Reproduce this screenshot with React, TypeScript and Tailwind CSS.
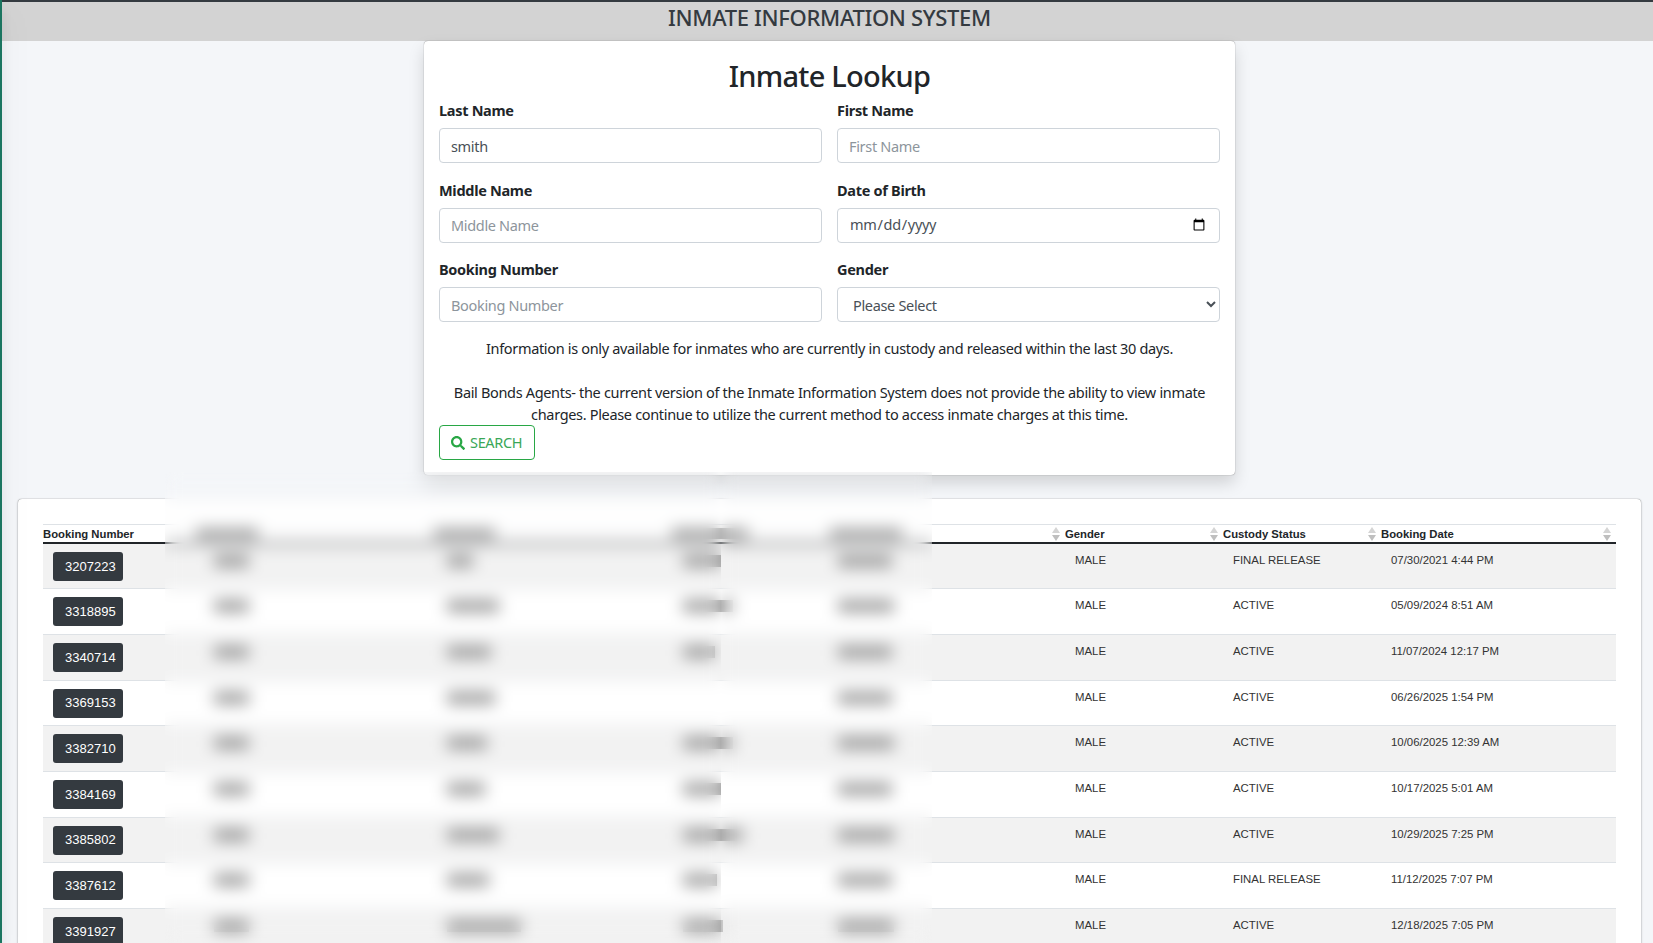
import { FC } from 'react'
import { FaSearch } from 'react-icons/fa'

const ROWS = [
  { num: '3207223', status: 'FINAL RELEASE', date: '07/30/2021 4:44 PM', blobs: [35, 26, 38, 54] },
  { num: '3318895', status: 'ACTIVE', date: '05/09/2024 8:51 AM', blobs: [35, 52, 50, 56] },
  { num: '3340714', status: 'ACTIVE', date: '11/07/2024 12:17 PM', blobs: [35, 44, 32, 54] },
  { num: '3369153', status: 'ACTIVE', date: '06/26/2025 1:54 PM', blobs: [35, 48, 0, 54] },
  { num: '3382710', status: 'ACTIVE', date: '10/06/2025 12:39 AM', blobs: [35, 40, 50, 56] },
  { num: '3384169', status: 'ACTIVE', date: '10/17/2025 5:01 AM', blobs: [35, 38, 38, 54] },
  { num: '3385802', status: 'ACTIVE', date: '10/29/2025 7:25 PM', blobs: [35, 52, 60, 56] },
  { num: '3387612', status: 'FINAL RELEASE', date: '11/12/2025 7:07 PM', blobs: [35, 42, 34, 54] },
  { num: '3391927', status: 'ACTIVE', date: '12/18/2025 7:05 PM', blobs: [35, 74, 40, 56] },
]

const BLOB_PAD = ['pl-[21px]', 'pl-[16px]', 'pl-[14px]', 'pl-[11px]']

const SortIcon: FC = () => (
  <svg width="8" height="14" viewBox="0 0 8 14" className="shrink-0">
    <path d="M4 0 L8 6 H0 Z" fill="#d4d4d4" />
    <path d="M4 14 L8 8 H0 Z" fill="#bfbfbf" />
  </svg>
)

const Field: FC<{ label: string; placeholder: string; value?: string }> = ({ label, placeholder, value }) => (
  <div>
    <label className="block text-[14.5px] leading-[22px] font-bold text-[#212529] mb-[7px] tracking-[-0.3px]">{label}</label>
    <input
      readOnly
      defaultValue={value}
      placeholder={placeholder}
      className="block w-full h-[35px] px-[11px] text-[14.5px] text-[#495057] placeholder:text-[#8d959c] bg-white border border-[#ced4da] rounded tracking-[-0.33px]"
    />
  </div>
)

const App: FC = () => {
  return (
    <div className="h-[943px] overflow-hidden bg-[#f4f6f9] relative font-['Noto_Sans',sans-serif] text-[#212529]">
      <div className="h-[2px] bg-[#343a40]" />
      <div className="absolute left-0 top-0 bottom-0 w-[2px] bg-[#1b7560] z-20 shadow-[0_14px_28px_rgba(0,0,0,0.25),0_10px_10px_rgba(0,0,0,0.22)]" />

      <div className="h-[39px] bg-[#d3d3d3] pl-[6px] text-center text-[22px] leading-[30px] font-medium text-[#343a40] tracking-[-0.33px]">
        INMATE INFORMATION SYSTEM
      </div>

      <div className="w-[811px] h-[434px] ml-[424px] bg-white rounded-[4px] px-[15px] shadow-[0_0_1px_rgba(0,0,0,0.6),0_8px_16px_rgba(0,0,0,0.15)] relative z-10">
        <h1 className="text-center text-[29px] leading-[44px] font-medium tracking-[-0.75px] text-[#212529] pt-[13px] h-[56px]">Inmate Lookup</h1>
        <div className="grid grid-cols-2 gap-x-[15px] gap-y-[15.5px] mt-[2px]">
          <Field label="Last Name" placeholder="Last Name" value="smith" />
          <Field label="First Name" placeholder="First Name" />
          <Field label="Middle Name" placeholder="Middle Name" />
          <div>
            <label className="block text-[14.5px] leading-[22px] font-bold mb-[7px] tracking-[-0.3px]">Date of Birth</label>
            <input type="date" className="block w-full h-[35px] px-[11px] text-[14.5px] text-[#495057] bg-white border border-[#ced4da] rounded tracking-[-0.33px]" />
          </div>
          <Field label="Booking Number" placeholder="Booking Number" />
          <div>
            <label className="block text-[14.5px] leading-[22px] font-bold mb-[7px] tracking-[-0.3px]">Gender</label>
            <select defaultValue="" className="block w-full h-[35px] px-[11px] text-[14.5px] text-[#495057] bg-white border border-[#ced4da] rounded tracking-[-0.33px]">
              <option value="">Please Select</option>
            </select>
          </div>
        </div>
        <p className="text-center text-[14.5px] leading-[22px] tracking-[-0.33px] mt-[15px]">
          Information is only available for inmates who are currently in custody and released within the last 30 days.
        </p>
        <p className="text-center text-[14.5px] leading-[22px] tracking-[-0.33px] mt-[22px] px-[10px]">
          Bail Bonds Agents- the current version of the Inmate Information System does not provide the ability to view inmate charges. Please continue to utilize the current method to access inmate charges at this time.
        </p>
        <button className="flex items-center gap-[5px] h-[35px] w-[96px] px-[11px] border border-[#28a745] rounded text-[14.5px] text-[#3aa757] tracking-[-0.33px]">
          <FaSearch size={14} className="text-[#28a745]" />
          SEARCH
        </button>
      </div>

      <div className="absolute left-[18px] right-[12px] top-[499px] bottom-[-20px] bg-white rounded-[4px] shadow-[0_0_1px_rgba(0,0,0,0.6),0_1px_3px_rgba(0,0,0,0.2)] px-[25px] pt-[25px] font-['Liberation_Sans',sans-serif]">
        <table className="w-full table-fixed border-collapse text-[11.4px] text-[#212529]">
          <colgroup>
            <col className="w-[150px]" />
            <col className="w-[238px]" />
            <col className="w-[238px]" />
            <col className="w-[158px]" />
            <col className="w-[238px]" />
            <col className="w-[158px]" />
            <col className="w-[158px]" />
            <col />
          </colgroup>
          <thead>
            <tr className="border-t border-b-2 border-t-[#dee2e6] border-b-[#212529] h-[17px] text-[11.3px] leading-[17px]">
              <th className="text-left p-0 font-bold"><span className="block translate-y-[1px]">Booking Number</span></th>
              {[62, 61, 76].map((w, i) => (
                <th key={i} className="p-0">
                  <div className="ml-[3px] h-[11px] bg-[#a8a8a8]" style={{ width: w }} />
                </th>
              ))}
              <th className="p-0">
                <div className="flex items-center justify-between pr-[5px]">
                  <div className="ml-[3px] w-[72px] h-[11px] bg-[#a8a8a8]" />
                  <SortIcon />
                </div>
              </th>
              {['Gender', 'Custody Status', 'Booking Date'].map(h => (
                <th key={h} className="p-0 text-left font-bold">
                  <div className="flex items-center justify-between pr-[5px]"><span className="translate-y-[1px]">{h}</span><SortIcon /></div>
                </th>
              ))}
            </tr>
          </thead>
          <tbody>
            {ROWS.map((r, i) => (
              <tr key={r.num} className={`h-[45.7px] border-b border-[#dee2e6] align-top ${i % 2 === 0 ? 'bg-[#f2f2f2]' : 'bg-white'}`}>
                <td className="pl-[10px] pt-[8px]">
                  <button className="block w-[70px] h-[29px] pl-[12px] text-left text-[13px] text-white bg-[#343a40] rounded-[3px]">{r.num}</button>
                </td>
                {r.blobs.map((w, j) => (
                  <td key={j} className={`${BLOB_PAD[j]} pt-[11px]`}>
                    {w > 0 && <div className="h-[12px] bg-[#999999]" style={{ width: w }} />}
                  </td>
                ))}
                <td className="pl-[10px] pt-[8px] leading-[16px] text-[#333]">MALE</td>
                <td className="pl-[10px] pt-[8px] leading-[16px] text-[#333]">{r.status}</td>
                <td className="pl-[10px] pt-[8px] leading-[16px] text-[#333]">{r.date}</td>
              </tr>
            ))}
          </tbody>
        </table>
      </div>

      <div className="absolute left-[165px] top-[472px] bottom-0 w-[556px] z-30 backdrop-blur-[8px]" />
      <div className="absolute left-[721px] top-[472px] bottom-0 w-[211px] z-30 backdrop-blur-[8px]" />
    </div>
  )
}

export default App
